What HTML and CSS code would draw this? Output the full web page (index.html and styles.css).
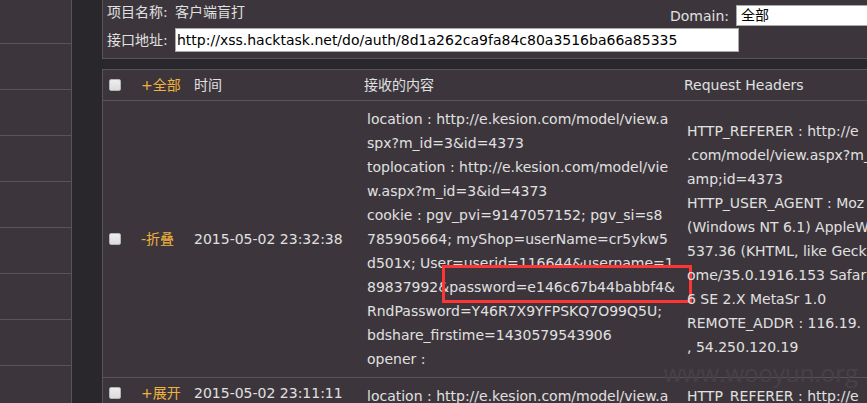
FILE: index.html
```html
<!DOCTYPE html>
<html lang="zh-CN">
<head>
<meta charset="utf-8">
<title>客户端盲打</title>
<link rel="stylesheet" href="styles.css">
</head>
<body>
<div class="page">
  <nav class="sidebar">
    <ul class="menu">
      <li></li><li></li><li></li><li></li><li></li><li></li><li></li><li></li><li></li>
    </ul>
  </nav>
  <main class="content">
    <section class="panel">
      <div class="bar">
        <span class="project"><span class="name">项目名称:</span>客户端盲打</span>
        <label class="domain-label" for="domain">Domain:</label>
        <select class="domain" id="domain"><option>全部</option></select>
      </div>
      <div class="address">
        <label class="name" for="api">接口地址:</label>
        <input class="api" id="api" type="text" value="http://xss.hacktask.net/do/auth/8d1a262ca9fa84c80a3516ba66a85335">
      </div>
    </section>
    <table class="records">
      <colgroup><col class="c-check"><col class="c-toggle"><col class="c-time"><col class="c-body"><col></colgroup>
      <thead>
        <tr>
          <th><input class="tick" type="checkbox" aria-label="全部"></th>
          <th><a href="#">+全部</a></th>
          <th>时间</th>
          <th>接收的内容</th>
          <th>Request Headers</th>
        </tr>
      </thead>
      <tbody>
        <tr>
          <td><input class="tick" type="checkbox" aria-label="2015-05-02 23:32:38"></td>
          <td><a href="#">-折叠</a></td>
          <td>2015-05-02 23:32:38</td>
          <td><div class="detail">location : http://e.kesion.com/model/view.a<br>spx?m_id=3&amp;id=4373<br>toplocation : http://e.kesion.com/model/vie<br>w.aspx?m_id=3&amp;id=4373<br>cookie : pgv_pvi=9147057152; pgv_si=s8<br>785905664; myShop=userName=cr5ykw5<br>d501x; User=userid=116644&amp;username=1<br>89837992&amp;password=e146c67b44babbf4&amp;<br>RndPassword=Y46R7X9YFPSKQ7O99Q5U;<br>bdshare_firstime=1430579543906<br>opener :<span class="mark"></span></div></td>
          <td><div class="detail">HTTP_REFERER : http://e<br>.com/model/view.aspx?m_<br>amp;id=4373<br>HTTP_USER_AGENT : Moz<br>(Windows NT 6.1) AppleW<br>537.36 (KHTML, like Geck<br>ome/35.0.1916.153 Safar<br>6 SE 2.X MetaSr 1.0<br>REMOTE_ADDR : 116.19.<br>, 54.250.120.19</div></td>
        </tr>
        <tr class="closed">
          <td><input class="tick" type="checkbox" aria-label="2015-05-02 23:11:11"></td>
          <td><a href="#">+展开</a></td>
          <td>2015-05-02 23:11:11</td>
          <td><div class="detail">location : http://e.kesion.com/model/view.a</div></td>
          <td><div class="detail">HTTP_REFERER : http://e</div></td>
        </tr>
      </tbody>
    </table>
  </main>
  <div class="watermark">www.wooyun.org</div>
</div>
</body>
</html>
```
FILE: styles.css
```css
* { box-sizing: border-box; }

body {
  margin: 0;
  background: #29272c;
  color: #e0e0e0;
  font: 14px/24px "DejaVu Sans", "Noto Sans CJK SC", sans-serif;
}

.page {
  position: relative;
  display: flex;
  gap: 30px;
  height: 100vh;
  overflow: hidden;
}

.sidebar {
  flex: 0 0 72px;
  background: #3c363c;
  border-right: 1px solid #58545a;
}

.menu {
  margin: 0;
  padding: 0;
  list-style: none;
}

.menu li {
  height: 46px;
  border-bottom: 1px solid #58545a;
}

.menu li:first-child { height: 44px; }

.content {
  flex: 1;
  min-width: 0;
}

.panel {
  margin-bottom: 10px;
  padding-bottom: 6px;
  background: #3c363c;
  border: solid #58545a;
  border-width: 0 0 1px 1px;
}

.bar, .address {
  display: flex;
  padding-left: 4px;
}

.bar { height: 28px; }

.name {
  display: inline-block;
  width: 68px;
}

.domain-label {
  margin: 4px 7px 0 auto;
}

.domain {
  appearance: none;
  align-self: flex-start;
  width: 131px;
  height: 21px;
  margin-top: 5px;
  padding: 0 4px;
  border: 1px solid #a9a9a9;
  border-right: 0;
  border-radius: 0;
  background: #fff;
  color: #000;
  font: inherit;
  line-height: 19px;
}

.api {
  width: 564px;
  height: 24px;
  padding: 0 1px;
  border: 1px solid #a9a9a9;
  background: #fff;
  color: #000;
  font: inherit;
}

.records {
  width: 100%;
  table-layout: fixed;
  border-spacing: 0;
  background: #3c363c;
  border: solid #58545a;
  border-width: 1px 0 0 1px;
}

.c-check { width: 32px; }
.c-toggle { width: 53px; }
.c-time { width: 170px; }
.c-body { width: 320px; }

.records th, .records td {
  padding: 0 0 0 6px;
  border-bottom: 1px solid #58545a;
  font-weight: normal;
  text-align: left;
  vertical-align: middle;
  white-space: nowrap;
}

.records th { height: 31px; }

.records a {
  color: #f0b23c;
  text-decoration: none;
}

.tick {
  appearance: none;
  display: block;
  width: 12px;
  height: 12px;
  margin: 0;
  border: 1px solid #b4b4b4;
  border-radius: 2px;
  background: linear-gradient(#ededed, #dcdcdc);
}

.detail {
  position: relative;
  padding: 6px 3px;
}

.mark {
  position: absolute;
  top: 164px;
  left: 78px;
  width: 250px;
  height: 38px;
  border: 3px solid #ff3434;
}

.closed td { height: 30px; }

.closed .detail {
  height: 30px;
  padding-bottom: 0;
}

.watermark {
  position: absolute;
  right: 9px;
  bottom: 14px;
  color: #464246;
  font: 24px/32px "Open Sans", sans-serif;
}
```
